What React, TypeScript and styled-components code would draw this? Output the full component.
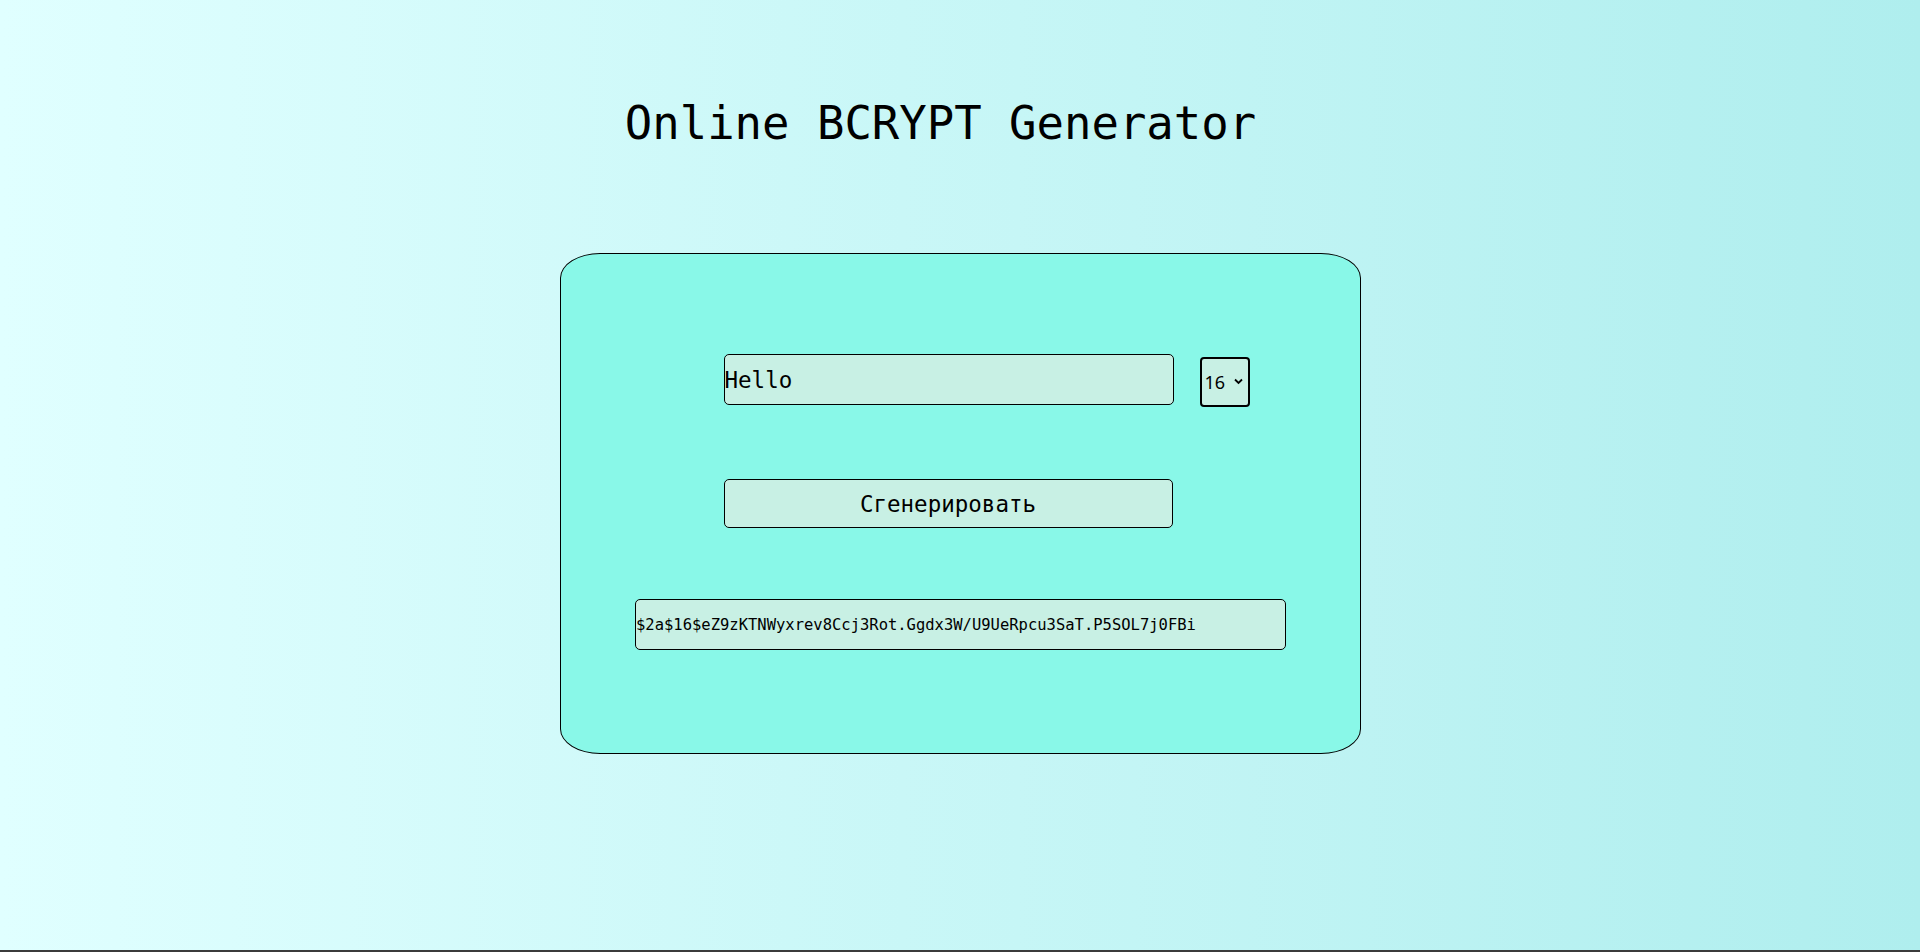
import React, { useState } from "react";
import styled, { createGlobalStyle } from "styled-components";

const GlobalStyle = createGlobalStyle`
  html, body {
    margin: 0;
    padding: 0;
  }
  body {
    font-family: "DejaVu Sans Mono", "Liberation Mono", monospace;
    background: linear-gradient(to right, #e0ffff, #afeeee);
    min-height: 952px;
  }
  * { box-sizing: border-box; }
`;

const Page = styled.div`
  display: flex;
  flex-direction: column;
  align-items: center;
  height: 952px;
`;

const Title = styled.h1`
  margin: 97px 39px 0 0;
  font-family: "DejaVu Sans Mono", monospace;
  font-weight: normal;
  font-size: 45.6px;
  line-height: 54px;
  color: #000;
`;

const Card = styled.section`
  margin-top: 102px;
  width: 801px;
  height: 501px;
  border: 1px solid #000;
  border-radius: 5%;
  background: #89f8e8;
  display: flex;
  flex-direction: column;
  padding-top: 100px;
`;

const Form = styled.div`
  display: flex;
  flex-direction: column;
  align-self: flex-start;
  margin-left: 163px;
`;

const Row = styled.div`
  display: flex;
  align-items: flex-start;
  gap: 26px;
`;

const TextInput = styled.input`
  width: 450px;
  height: 51px;
  padding: 0;
  border: 1px solid #000;
  border-radius: 5px;
  background: #c8f0e4;
  font-family: "DejaVu Sans Mono", monospace;
  font-size: 22.5px;
  color: #000;
  outline: none;
`;

const SelectWrap = styled.div`
  position: relative;
  margin-top: 3px;
  width: 50px;
  height: 50px;
`;

const Select = styled.select`
  appearance: none;
  width: 50px;
  height: 50px;
  border: 2px solid #000;
  border-radius: 4px;
  background: #c8f0e4;
  padding: 0 0 0 3px;
  font-family: "Noto Sans", "DejaVu Sans", sans-serif;
  font-size: 18px;
  color: #000;
  outline: none;
`;

const Chevron = styled.svg`
  position: absolute;
  right: 7px;
  top: 21px;
  width: 9px;
  height: 7px;
  pointer-events: none;
`;

const Button = styled.button`
  margin-top: 72px;
  width: 449px;
  height: 49px;
  border: 1px solid #000;
  border-radius: 5px;
  background: #c8f0e4;
  font-family: "DejaVu Sans Mono", monospace;
  font-size: 22.5px;
  color: #000;
  padding: 0;
  cursor: pointer;
`;

const Output = styled.div`
  align-self: center;
  margin-top: 71px;
  margin-left: 1px;
  width: 651px;
  height: 51px;
  border: 1px solid #000;
  border-radius: 5px;
  background: #c8f0e4;
  display: flex;
  align-items: center;
  font-family: "DejaVu Sans Mono", monospace;
  font-size: 15.5px;
  color: #000;
  white-space: nowrap;
  overflow: hidden;
`;

const BottomStrip = styled.div`
  margin-top: auto;
  width: 100%;
  height: 2px;
  background: #3b3b3b;
`;

export default function App() {
  const [text, setText] = useState("Hello");
  const [rounds, setRounds] = useState("16");
  return (
    <>
      <GlobalStyle />
      <Page>
        <Title>Online BCRYPT Generator</Title>
        <Card>
          <Form>
            <Row>
              <TextInput value={text} onChange={(e) => setText(e.target.value)} />
              <SelectWrap>
                <Select value={rounds} onChange={(e) => setRounds(e.target.value)}>
                  {Array.from({ length: 12 }, (_, i) => String(i + 5)).map((v) => (
                    <option key={v} value={v}>
                      {v}
                    </option>
                  ))}
                </Select>
                <Chevron viewBox="0 0 9 7">
                  <path d="M1 1.5 L4.5 5 L8 1.5" fill="none" stroke="#000" strokeWidth="1.8" />
                </Chevron>
              </SelectWrap>
            </Row>
            <Button>Сгенерировать</Button>
          </Form>
          <Output>$2a$16$eZ9zKTNWyxrev8Ccj3Rot.Ggdx3W/U9UeRpcu3SaT.P5SOL7j0FBi</Output>
        </Card>
        <BottomStrip />
      </Page>
    </>
  );
}
